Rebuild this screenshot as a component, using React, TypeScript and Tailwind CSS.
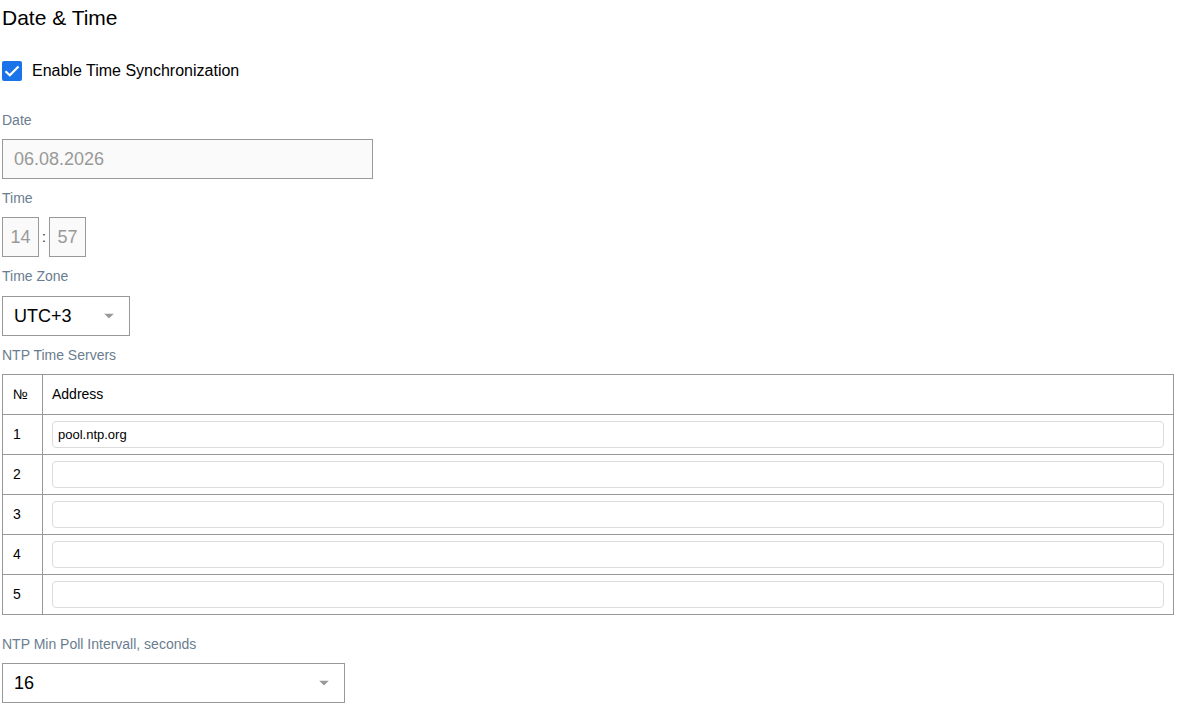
import React from "react";

const Arrow = () => (
  <svg width="10" height="5" viewBox="0 0 10 5" className="absolute right-[15px] top-1/2 -translate-y-1/2">
    <polygon points="0,0 10,0 5,5" fill="#9a9a9a" />
  </svg>
);

const Label = ({ children, className = "" }: { children: React.ReactNode; className?: string }) => (
  <div className={`h-[16px] text-[14px] leading-[16px] text-[#6a7d90] ${className}`}>{children}</div>
);

export default function App() {
  const rows = ["pool.ntp.org", "", "", "", ""];
  return (
    <div className="bg-white text-black pl-[2px] pr-[5px] font-['Liberation_Sans',Arial,sans-serif]">
      <div className="pt-[5px] h-[30px] text-[21px] leading-[25px]">Date &amp; Time</div>
      <div className="mt-[31px] flex items-center h-[20px]">
        <div className="w-[20px] h-[20px] rounded-[2px] bg-[#1a73e8] flex items-center justify-center">
          <svg width="20" height="20" viewBox="0 0 20 20">
            <path d="M3.5 10.2 L7.8 14.3 L16.5 5.5" fill="none" stroke="white" strokeWidth="2.2" />
          </svg>
        </div>
        <span className="ml-[10px] text-[16px] leading-[20px]">Enable Time Synchronization</span>
      </div>
      <Label className="mt-[31px]">Date</Label>
      <div className="mt-[11px] w-[371px] h-[40px] border border-[#999] bg-[#fafafa] flex items-center pl-[11px] text-[18px] text-[#999]">
        06.08.2026
      </div>
      <Label className="mt-[11px]">Time</Label>
      <div className="mt-[11px] flex items-center h-[40px]">
        <div className="w-[37px] h-[40px] border border-[#999] bg-[#fafafa] flex items-center justify-center text-[18px] text-[#999]">14</div>
        <span className="w-[10px] text-center text-[14px] text-[#333]">:</span>
        <div className="w-[37px] h-[40px] border border-[#999] bg-[#fafafa] flex items-center justify-center text-[18px] text-[#999]">57</div>
      </div>
      <Label className="mt-[11px]">Time Zone</Label>
      <div className="mt-[12px] relative w-[128px] h-[40px] border border-[#999] flex items-center pl-[11px] text-[18px]">
        UTC+3
        <Arrow />
      </div>
      <Label className="mt-[11px]">NTP Time Servers</Label>
      <table className="mt-[11px] w-[1172px] border-collapse border border-[#999] text-[14px]">
        <thead>
          <tr className="h-[40px]">
            <th className="w-[40px] border border-[#999] font-normal text-left pl-[10px]">№</th>
            <th className="border border-[#999] font-normal text-left pl-[9px]">Address</th>
          </tr>
        </thead>
        <tbody>
          {rows.map((v, i) => (
            <tr key={i} className="h-[40px]">
              <td className="border border-[#999] pl-[10px]">{i + 1}</td>
              <td className="border border-[#999] px-[9px]">
                <div className="h-[27px] rounded-[4px] border border-[#dcdcdc] flex items-center pl-[5px] text-[13px]">{v}</div>
              </td>
            </tr>
          ))}
        </tbody>
      </table>
      <Label className="mt-[21px]">NTP Min Poll Intervall, seconds</Label>
      <div className="mt-[11px] relative w-[343px] h-[40px] border border-[#999] flex items-center pl-[11px] text-[18px]">
        16
        <Arrow />
      </div>
    </div>
  );
}
